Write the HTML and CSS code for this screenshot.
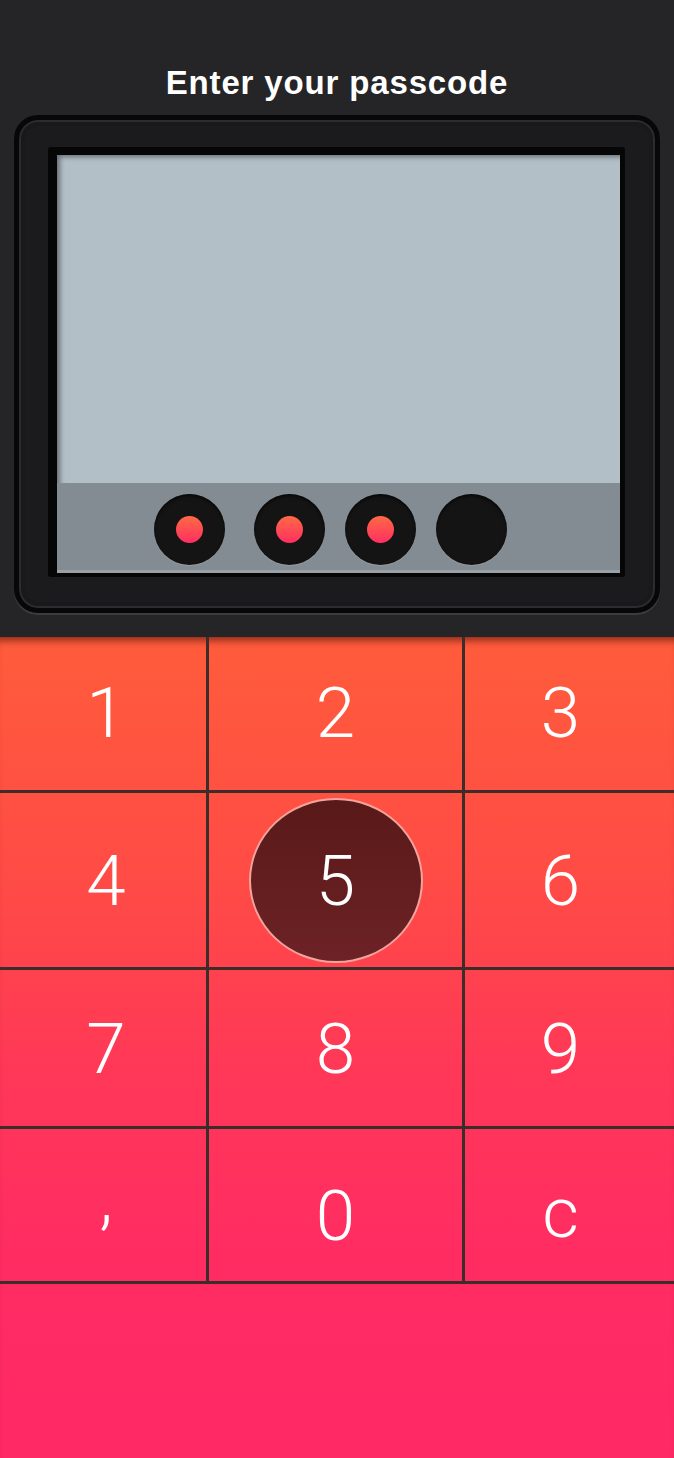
FILE: index.html
```html
<!DOCTYPE html>
<html lang="en">
<head>
<meta charset="utf-8">
<title>Enter your passcode</title>
<link rel="stylesheet" href="styles.css">
</head>
<body>
<div class="page">
  <header class="top">
    <h1 class="title">Enter your passcode</h1>
    <div class="frame">
      <div class="bezel">
        <div class="screen">
          <div class="display"></div>
          <div class="dots">
            <span class="dot filled"><i></i></span>
            <span class="dot filled"><i></i></span>
            <span class="dot filled"><i></i></span>
            <span class="dot"></span>
          </div>
        </div>
      </div>
    </div>
  </header>
  <main class="keypad">
    <div class="key r1 c1"><span>1</span></div>
    <div class="key r1 c2"><span>2</span></div>
    <div class="key r1 c3"><span>3</span></div>
    <div class="key r2 c1"><span>4</span></div>
    <div class="key r2 c2"><span class="pressed">5</span></div>
    <div class="key r2 c3"><span>6</span></div>
    <div class="key r3 c1"><span>7</span></div>
    <div class="key r3 c2"><span>8</span></div>
    <div class="key r3 c3"><span>9</span></div>
    <div class="key r4 c1"><span class="comma">,</span></div>
    <div class="key r4 c2"><span>0</span></div>
    <div class="key r4 c3"><span class="clear">c</span></div>
  </main>
</div>
</body>
</html>
```
FILE: styles.css
```css
* { box-sizing: border-box; }
html, body { margin: 0; padding: 0; }
body {
  width: 674px;
  height: 1458px;
  overflow: hidden;
  background: #ff2966;
  font-family: "Liberation Sans", Arial, sans-serif;
}
.page {
  display: flex;
  flex-direction: column;
  height: 1458px;
}
.top {
  height: 637px;
  background: #252528;
  padding-top: 63px;
}
.title {
  margin: 0;
  height: 40px;
  line-height: 40px;
  font-size: 33px;
  font-weight: bold;
  letter-spacing: 0.85px;
  color: #ffffff;
  text-align: center;
}
.frame {
  margin: 12px 14px 0 14px;
  height: 498px;
  border-radius: 24px;
  background: #1b1b1e;
  border: 5px solid #070708;
  box-shadow: inset 0 0 0 2px #2c2c30, inset 0 0 0 6px #19191c, 0 2px 0 #3c3c40;
  padding: 27px 30px 31px 29px;
}
.bezel {
  height: 430px;
  background: #060607;
  border-radius: 3px;
  padding: 8px 5px 4px 9px;
}
.screen {
  height: 100%;
  display: flex;
  flex-direction: column;
  box-shadow: inset 4px 3px 4px rgba(0,0,0,0.45);
  background: #b3bfc6;
}
.display {
  height: 328px;
  background: #b3bfc6;
  box-shadow: inset 5px 4px 5px -2px rgba(40,45,50,0.55);
}
.dots {
  flex: 1;
  background: #848c93;
  border-bottom: 3px solid #9aa2a8;
  display: flex;
  align-items: flex-start;
  padding-top: 11px;
  padding-left: 97px;
  gap: 20px;
}
.dot {
  width: 71px;
  height: 71px;
  border-radius: 50%;
  background: #141415;
  box-shadow: 0 1px 1px rgba(255,255,255,0.15), inset 0 2px 3px rgba(0,0,0,0.6);
  display: flex;
  align-items: center;
  justify-content: center;
}
.dot:first-child { margin-right: 9px; }
.dot i {
  display: block;
  width: 27px;
  height: 27px;
  border-radius: 50%;
  background: linear-gradient(180deg, #ff6a45 0%, #ff2f62 100%);
}
.keypad {
  flex: 1;
  display: grid;
  grid-template-columns: 209px 256px 1fr;
  grid-template-rows: 156px 177px 159px 155px;
  align-content: start;
  background: linear-gradient(180deg, #ff5c3b 0%, #ff4b46 30%, #ff3857 52%, #ff2c62 75%, #ff2966 100%);
  box-shadow: inset 0 9px 7px -5px rgba(60,15,5,0.55);
}
.key {
  display: flex;
  align-items: center;
  justify-content: center;
  border-bottom: 3px solid #3c2c2a;
  color: #ffffff;
  font-family: Roboto, "Liberation Sans", Arial, sans-serif;
  font-weight: 300;
  font-size: 71px;
  line-height: 1;
}
.c1, .c2 { border-right: 3px solid #3c2c2a; }
.c1 { padding-left: 6px; }
.c3 { padding-right: 18px; }
.r1 { padding-bottom: 3px; }
.r4 { padding-top: 20px; }
.pressed {
  width: 174px;
  height: 165px;
  border-radius: 50%;
  background: linear-gradient(180deg, #591918 0%, #6d2226 100%);
  border: 2px solid #f2a49d;
  display: flex;
  align-items: center;
  justify-content: center;
}
.comma { padding-bottom: 36px; }
.clear { padding-bottom: 6px; }
```
